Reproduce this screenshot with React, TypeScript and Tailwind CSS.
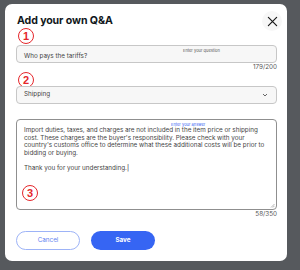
const Circled = ({ n }: { n: string }) => (
  <span className="inline-flex w-[16px] h-[16px] rounded-full border-[1.6px] border-[#e5262b] text-[#e5262b] text-[11px] font-bold leading-none items-center justify-center font-['Liberation_Sans',sans-serif]">
    {n}
  </span>
);

export default function App() {
  return (
    <div className="w-[300px] h-[270px] bg-[#56595d] pt-[4px] pl-[5px] font-['Inter','Noto_Sans',sans-serif]">
      <div className="w-[282px] h-[257px] bg-white rounded-[7px] pl-[11px] pr-[10px] pt-[7px] flex flex-col">
        {/* header */}
        <div className="flex items-center justify-between h-[20px]">
          <h2 className="text-[10.6px] font-bold text-[#111820] tracking-[-0.1px] pl-[1px]">Add your own Q&amp;A</h2>
          <button className="w-[20px] h-[20px] rounded-full bg-[#f7f7f7] flex items-center justify-center mr-[-5px]">
            <svg width="11" height="11" viewBox="0 0 12 12" fill="none" stroke="#191919" strokeWidth="1.3" strokeLinecap="round">
              <path d="M1.5 1.5l9 9M10.5 1.5l-9 9" />
            </svg>
          </button>
        </div>

        <div className="flex items-start h-[17px] mt-[-3px] pl-[2px]">
          <Circled n="1" />
        </div>

        <div className="relative h-[18px] rounded-[4px] border border-[#c7c7c7] bg-[#f7f7f7] flex items-center pl-[7px] pt-[5px]">
          <span className="absolute left-[166px] top-[2px] text-[4px] text-[#555]">Enter your question</span>
          <span className="text-[6.3px] text-[#444]">Who pays the tariffs?</span>
        </div>
        <div className="text-right text-[6.3px] text-[#555] h-[9px] leading-[9px]">179/200</div>

        <div className="flex items-start h-[14px] pl-[2px]">
          <Circled n="2" />
        </div>

        <div className="h-[18px] rounded-[4px] border border-[#c7c7c7] bg-[#f7f7f7] flex items-center justify-between pl-[7px] pr-[8px]">
          <span className="text-[6.3px] text-[#444]">Shipping</span>
          <svg width="6" height="4" viewBox="0 0 6 4" fill="none" stroke="#555" strokeWidth="0.9">
            <path d="M1 1l2 2 2-2" />
          </svg>
        </div>

        <div className="relative mt-[15px] h-[91px] rounded-[4px] border border-[#8f8f8f] bg-white pl-[7px] pr-[7px] pt-[7px]">
          <span className="absolute left-[154px] top-[2px] text-[4px] text-[#3665f3]">Enter your answer</span>
          <p className="text-[6.3px] leading-[7.6px] text-[#444]">
            Import duties, taxes, and charges are not included in the item price or shipping cost. These charges are the buyer&apos;s responsibility. Please check with your country&apos;s customs office to determine what these additional costs will be prior to bidding or buying.
          </p>
          <p className="text-[6.3px] leading-[7.6px] text-[#444] mt-[7.6px]">
            Thank you for your understanding.<span className="text-[#111]">|</span>
          </p>
          <div className="absolute left-[5px] top-[65px] flex">
            <Circled n="3" />
          </div>
          <svg className="absolute right-[1px] bottom-[1px]" width="5" height="5" viewBox="0 0 5 5" stroke="#888" strokeWidth="0.6">
            <path d="M1 4.5L4.5 1M2.8 4.5L4.5 2.8" />
          </svg>
        </div>
        <div className="text-right text-[6.3px] text-[#555] h-[9px] leading-[9px]">58/350</div>

        <div className="flex gap-[11px] mt-[12px]">
          <button className="w-[64px] h-[19px] rounded-full border border-[#9db3f7] text-[#5f82f0] text-[6.3px]">Cancel</button>
          <button className="w-[64px] h-[19px] rounded-full bg-[#3665f3] text-white text-[6.3px] font-bold">Save</button>
        </div>
      </div>
    </div>
  );
}
